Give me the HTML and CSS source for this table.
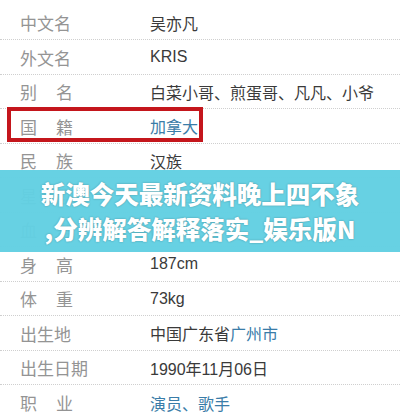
FILE: index.html
```html
<!DOCTYPE html>
<html lang="zh-CN">
<head>
<meta charset="utf-8">
<link rel="stylesheet" href="styles.css">
</head>
<body>
<div class="card">
  <div class="info">
    <div class="row"><span class="label">中文名</span><span class="value">吴亦凡</span></div>
    <div class="row"><span class="label">外文名</span><span class="value">KRIS</span></div>
    <div class="row"><span class="label two"><span>别</span><span>名</span></span><span class="value">白菜小哥、煎蛋哥、凡凡、小爷</span></div>
    <div class="row"><span class="label two"><span>国</span><span>籍</span></span><span class="value link">加拿大</span></div>
    <div class="row"><span class="label two"><span>民</span><span>族</span></span><span class="value">汉族</span></div>
    <div class="row"><span class="label two"><span>星</span><span>座</span></span><span class="value link">天秤座</span></div>
    <div class="row"><span class="label two"><span>血</span><span>型</span></span><span class="value">O型</span></div>
    <div class="row"><span class="label two"><span>身</span><span>高</span></span><span class="value">187cm</span></div>
    <div class="row"><span class="label two"><span>体</span><span>重</span></span><span class="value">73kg</span></div>
    <div class="row"><span class="label">出生地</span><span class="value">中国广东省<span class="link">广州市</span></span></div>
    <div class="row"><span class="label">出生日期</span><span class="value">1990年11月06日</span></div>
    <div class="row last"><span class="label two"><span>职</span><span>业</span></span><span class="value link">演员、歌手</span></div>
  </div>
  <div class="mark"></div>
  <div class="banner">
    <p class="banner-text">新澳今天最新资料晚上四不象<br>,分辨解答解释落实_娱乐版N</p>
  </div>
</div>
</body>
</html>
```

FILE: styles.css
```css
html, body {
  margin: 0;
  padding: 0;
  background: #ffffff;
}
.card {
  position: relative;
  width: 400px;
  height: 417px;
  overflow: hidden;
  font-family: "Liberation Sans", "Noto Sans CJK SC", sans-serif;
}
.info {
  padding-top: 5.75px;
}
.row {
  display: flex;
  align-items: center;
  height: 34.5px;
  box-sizing: border-box;
  padding-left: 20px;
  border-bottom: 1px dotted #cfcfcf;
}
.row.last {
  border-bottom: none;
}
.label {
  width: 130px;
  flex: none;
  font-size: 17px;
  color: #949494;
}
.label.two {
  display: flex;
  justify-content: space-between;
  width: 53px;
  margin-right: 77px;
}
.value {
  font-size: 16px;
  color: #3a3a3a;
}
.link {
  color: #3a7ca8;
}
.mark {
  position: absolute;
  left: 7px;
  top: 107px;
  width: 196px;
  height: 35px;
  box-sizing: border-box;
  border: 4.5px solid #c4161c;
}
.banner {
  position: absolute;
  left: 0;
  right: 0;
  top: 170px;
  height: 82px;
  background: rgba(98, 208, 226, 0.97);
  display: flex;
  align-items: center;
  justify-content: center;
}
.banner-text {
  margin: 0;
  text-align: center;
  color: #ffffff;
  font-family: "Noto Sans CJK SC", sans-serif;
  font-weight: 900;
  font-size: 24.5px;
  line-height: 35px;
  text-shadow: 0 0 2px rgba(0, 0, 0, 0.3);
}
```
